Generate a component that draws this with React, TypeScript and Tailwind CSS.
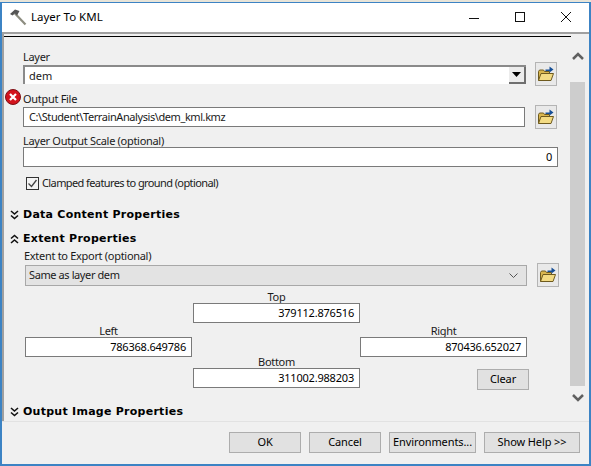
import React from "react";

const font = "font-['Noto_Sans',sans-serif]";
const label = "text-[11px] tracking-[-0.3px]";

const Folder = ({ className = "" }: { className?: string }) => (
  <button className={`flex h-6 w-[22px] shrink-0 items-center justify-center border border-[#b4b4b4] bg-[#e9e9e9] ${className}`}>
    <svg width="18" height="18" viewBox="0 0 18 18">
      <path d="M1.500 15.500V6.500l1-1.500h4l1 1.500h5v2" fill="#d9b64e" stroke="#6e5a1e" strokeWidth="1" />
      <path d="M1.500 15.500l2.500-7h12.500l-2.500 7z" fill="#f3db83" stroke="#6e5a1e" strokeWidth="1" />
      <path d="M8.500 4.500h4V1.500l4 3-4 3V6h-4z" fill="#164f96" />
    </svg>
  </button>
);

const Field = ({ value, className = "" }: { value: string; className?: string }) => (
  <div className={`flex h-5 items-center justify-end border border-[#7a7a7a] bg-white px-[5px] text-[11px] tracking-[-0.2px] text-black ${className}`}>
    {value}
  </div>
);

const Labeled = ({ text, value, className = "" }: { text: string; value: string; className?: string }) => (
  <div className={`flex w-[167px] flex-col items-center ${className}`}>
    <span className={`h-[13px] leading-[13px] ${label}`}>{text}</span>
    <Field value={value} className="w-full" />
  </div>
);

const Chevrons = ({ up = false }: { up?: boolean }) => (
  <svg width="9" height="10" viewBox="0 0 9 10" className={up ? "rotate-180" : ""}>
    <path d="M1 1l3.500 3L8 1M1 5.500l3.500 3 3.500-3" fill="none" stroke="#111" strokeWidth="1.600" />
  </svg>
);

const Section = ({ title, up, className = "" }: { title: string; up?: boolean; className?: string }) => (
  <div className={`flex h-4 items-center gap-[4px] pl-[6px] ${className}`}>
    <Chevrons up={up} />
    <span className="font-['DejaVu_Sans',sans-serif] text-[11px] font-bold tracking-[0.26px] text-black">{title}</span>
  </div>
);

const Btn = ({ text, className = "" }: { text: string; className?: string }) => (
  <button className={`flex h-[21px] items-center justify-center border border-[#adadad] bg-[#e1e1e1] text-[11px] tracking-[-0.1px] text-black ${className}`}>
    {text}
  </button>
);

export default function App() {
  return (
    <div className={`flex h-[466px] w-[591px] flex-col bg-[#e8e4d8] pt-[2px] text-[#1a1a1a] ${font}`}>
      <div className="flex min-h-0 flex-1 flex-col border-x-2 border-b-2 border-t border-[#3c83c4] bg-[#f0f0f0]">
        {/* title bar */}
        <div className="flex h-[29px] shrink-0 items-center bg-white pb-[2px] pl-[7px]">
          <svg width="18" height="18" viewBox="0 0 18 18">
            <path d="M6 5.500l10.500 11" stroke="#8d8d80" strokeWidth="2.200" />
            <path d="M1 6L6 1.500l4.500 1.500-2.500 4.500-2-2-2.500 2z" fill="#555" />
          </svg>
          <span className="ml-[4px] text-[11.500px] text-black">Layer To KML</span>
          <div className="ml-auto flex items-center">
            <svg width="46" height="16" viewBox="0 0 46 16"><path d="M18 9.500h10" stroke="#111" /></svg>
            <svg width="46" height="16" viewBox="0 0 46 16"><rect x="18.500" y="3.500" width="9" height="9" fill="none" stroke="#111" /></svg>
            <svg width="46" height="16" viewBox="0 0 46 16"><path d="M18 3l10 10M28 3L18 13" stroke="#111" /></svg>
          </div>
        </div>

        {/* scrolling panel */}
        <div className="relative flex h-[389px] shrink-0 border-l-2 border-t-2 border-[#a0a0a0] bg-[#f0f0f0]">
          <div className="absolute left-0 right-[18px] top-[2px] h-px bg-black" />
          <div className="w-[566px] shrink-0">
            <div className="h-[15px]" />
            <div className="flex items-end pl-[19px]">
              <div className="flex w-[503px] flex-col">
                <span className={`h-[16px] leading-[16px] ${label}`}>Layer</span>
                <div className="flex h-[19px] items-center border-l-2 border-t-2 border-[#8a8a8a] bg-white pl-[4px] text-[11px]">
                  <span className="pt-[1px]">dem</span>
                  <span className="ml-auto flex h-full w-[17px] items-center justify-center border-b-2 border-r-2 border-[#6f6f6f] bg-[#ececec]">
                    <svg width="9" height="5" viewBox="0 0 9 5"><path d="M0 0h9L4.500 5z" fill="#000" /></svg>
                  </span>
                </div>
              </div>
              <Folder className="ml-[9px] -mb-[2px]" />
            </div>
            <div className="relative mt-[2px] pl-[19px]">
              <svg width="16" height="16" viewBox="0 0 16 16" className="absolute left-[1px] top-[3px]">
                <circle cx="8" cy="8" r="7.500" fill="#d3131c" stroke="#7c1015" />
                <path d="M5 5l6 6M11 5l-6 6" stroke="#fff" strokeWidth="2.200" />
              </svg>
              <span className={`block h-[21px] pt-[4px] leading-[17px] ${label}`}>Output File</span>
              <div className="flex items-start">
                <div className="flex h-5 w-[502px] items-center border border-[#7a7a7a] bg-white px-[5px] text-[11px] tracking-[-0.42px]">
                  C:\Student\TerrainAnalysis\dem_kml.kmz
                </div>
                <Folder className="ml-[10px] -mt-[2px]" />
              </div>
            </div>
            <div className="pl-[19px]">
              <span className={`block h-[18px] pt-[4px] leading-[16px] ${label}`}>Layer Output Scale (optional)</span>
              <Field value="0" className="w-[535px]" />
            </div>
            <div className="mt-[9px] flex h-[14px] items-center pl-[22px]">
              <span className="flex h-[13px] w-[13px] items-center justify-center border border-[#333] bg-[#f4f4f4]">
                <svg width="11" height="11" viewBox="0 0 11 11"><path d="M1.500 5.500l3 3 5-6.500" fill="none" stroke="#444" strokeWidth="1.300" /></svg>
              </span>
              <span className="ml-[3px] text-[11px] tracking-[-0.6px]">Clamped features to ground (optional)</span>
            </div>
            <Section title="Data Content Properties" className="mt-[17px]" />
            <Section title="Extent Properties" up className="mt-[8px]" />
            <div className="pl-[20px]">
              <span className={`block h-[16px] leading-[17px] ${label}`}>Extent to Export (optional)</span>
            </div>
            <div className="flex items-center pl-[21px]">
              <div className="flex h-[21px] w-[502px] items-center border border-[#a8a8a8] bg-[#e3e3e3] pl-[3px] pr-[8px] text-[11px] tracking-[-0.4px]">
                Same as layer dem
                <svg width="9" height="5" viewBox="0 0 9 5" className="ml-auto"><path d="M0.500 0.500l4 4 4-4" fill="none" stroke="#555" /></svg>
              </div>
              <Folder className="ml-[10px]" />
            </div>
            <div className="pl-[189px]">
              <Labeled text="Top" value="379112.876516" className="mt-[3px]" />
            </div>
            <div className="mt-[1px] flex pl-[21px]">
              <Labeled text="Left" value="786368.649786" />
              <div className="w-[168px]" />
              <Labeled text="Right" value="870436.652027" />
            </div>
            <div className="flex pl-[189px]">
              <Labeled text="Bottom" value="311002.988203" className="-mt-[2px]" />
              <Btn text="Clear" className="ml-[117px] mt-[12px] w-[52px]" />
            </div>
            <Section title="Output Image Properties" className="mt-[14px]" />
          </div>
          {/* scrollbar */}
          <div className="flex w-[15px] shrink-0 flex-col items-center">
            <svg width="12" height="8" viewBox="0 0 12 8" className="mt-[18px]"><path d="M1 7l5-5 5 5" fill="none" stroke="#606060" strokeWidth="2.500" /></svg>
            <div className="mt-[22px] h-[304px] w-full bg-[#cdcdcd]" />
            <svg width="12" height="8" viewBox="0 0 12 8" className="mt-[8px]"><path d="M1 1l5 5 5-5" fill="none" stroke="#606060" strokeWidth="2.500" /></svg>
          </div>
        </div>

        {/* footer */}
        <div className="flex flex-1 items-start gap-2 border-t border-[#e2e2e2] pl-[227px] pt-[10px]">
          <Btn text="OK" className="w-[72px]" />
          <Btn text="Cancel" className="w-[72px]" />
          <Btn text="Environments..." className="w-[87px]" />
          <Btn text="Show Help >>" className="w-[96px]" />
        </div>
      </div>
    </div>
  );
}
